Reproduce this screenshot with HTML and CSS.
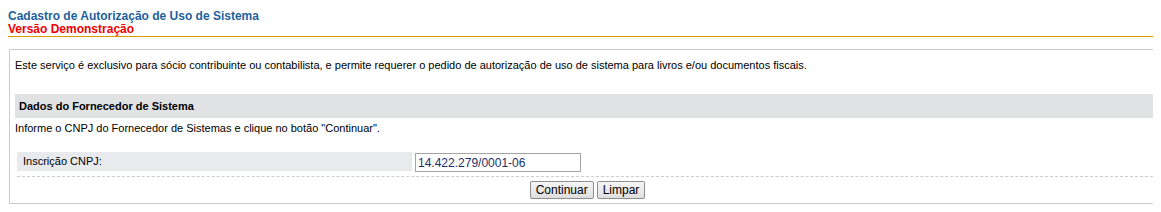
FILE: index.html
```html
<!DOCTYPE html>
<html lang="pt-BR">
<head>
	<meta charset="UTF-8">
	<title>Cadastro de Autorização de Uso de Sistema</title>
	<link rel="stylesheet" href="styles.css">
</head>
<body>
	<div class="topo">
		<div class="titulo">Cadastro de Autorização de Uso de Sistema</div>
		<div class="subtitulo">Versão Demonstração</div>
	</div>
	<div class="caixa">
		<p class="intro">Este serviço é exclusivo para sócio contribuinte ou contabilista, e permite requerer o pedido de autorização de uso de sistema para livros e/ou documentos fiscais.</p>
		<div class="barra">Dados do Fornecedor de Sistema</div>
		<p class="instrucao">Informe o CNPJ do Fornecedor de Sistemas e clique no botão "Continuar".</p>
		<div class="form">
			<div class="linha">
				<div class="rotulo">Inscrição CNPJ:</div>
				<div class="campo"><input type="text" value="14.422.279/0001-06"></div>
			</div>
			<div class="botoes">
				<input type="button" value="Continuar">
				<input type="button" value="Limpar">
			</div>
		</div>
	</div>
</body>
</html>
```

FILE: styles.css
```css
html, body {
	overflow: hidden;
}
body {
	margin: 8px;
	font-family: "Liberation Sans", Arial, sans-serif;
	font-size: 11px;
	color: #000;
}
.topo {
	border-bottom: 1px solid #d99a00;
	padding-top: 2px;
}
.titulo {
	color: #1e5f9c;
	font-weight: bold;
	font-size: 12px;
	line-height: 13px;
}
.subtitulo {
	color: #f00000;
	font-weight: bold;
	font-size: 12px;
	line-height: 13px;
}
.caixa {
	margin-top: 12px;
	margin-left: 1px;
	width: 1144px;
	padding: 5px 5px 4px 5px;
	border: 1px solid #cccccc;
}
.intro {
	margin: 0;
	padding: 4px 0 0 0;
	line-height: 13px;
}
.barra {
	margin-top: 22px;
	background: #e1e2e4;
	height: 24px;
	line-height: 24px;
	padding-left: 4px;
	font-weight: bold;
}
.instrucao {
	margin: 4px 0 0 0;
	line-height: 13px;
}
.form {
	margin-top: 17px;
	padding: 0 1px 0 2px;
}
.linha {
	display: flex;
	gap: 2px;
	padding-bottom: 4px;
	border-bottom: 1px dashed #cccccc;
}
.rotulo {
	width: 389px;
	height: 19px;
	line-height: 19px;
	padding-left: 6px;
	background: #e8eaed;
}
.campo {
	padding: 1px 0 0 1px;
}
.campo input {
	width: 166px;
	height: 19px;
	box-sizing: border-box;
	border: 1px solid #a5a5a5;
	padding: 0 2px;
	font-family: "Liberation Sans", Arial, sans-serif;
	font-size: 12px;
	color: #1c2f6b;
	margin: 0;
}
.botoes {
	display: flex;
	justify-content: center;
	gap: 3px;
	padding-top: 4px;
}
.botoes input {
	height: 18px;
	margin: 0;
	padding: 0 5px;
	font-family: "Liberation Sans", Arial, sans-serif;
	font-size: 12px;
	color: #000;
	border: 1px solid #8e8e8e;
	border-radius: 2px;
	background: linear-gradient(#f6f6f6, #dedede);
}
```
